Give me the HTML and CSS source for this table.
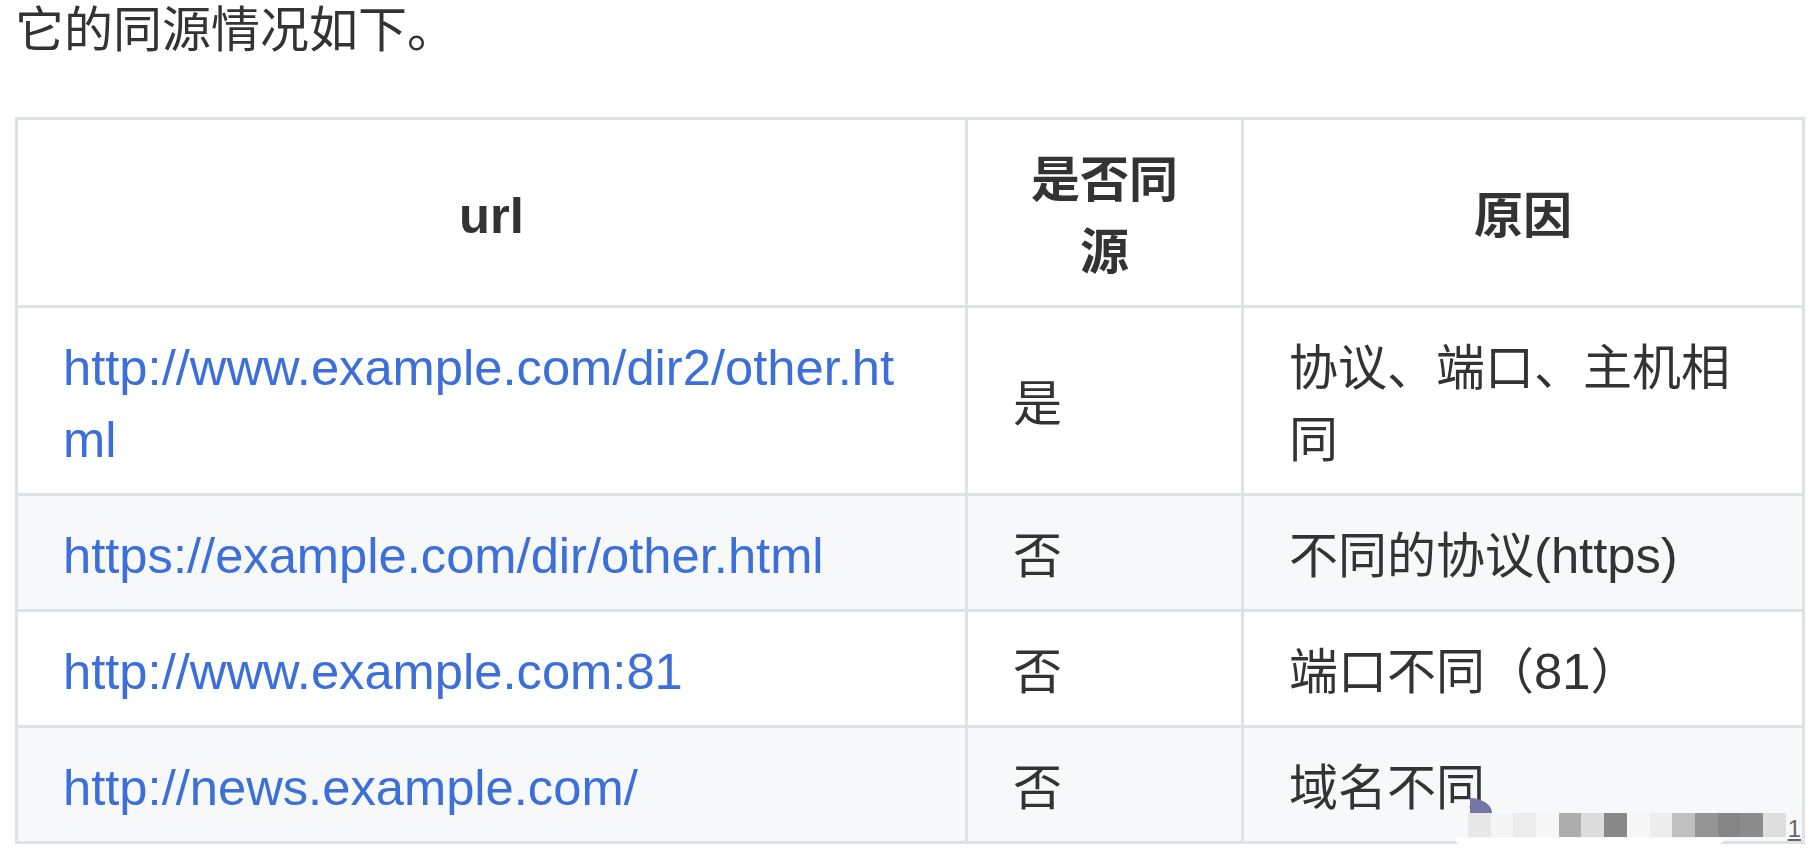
FILE: index.html
```html
<!DOCTYPE html>
<html lang="zh-CN">
<head>
<meta charset="utf-8">
<title>同源</title>
<link rel="stylesheet" href="styles.css">
</head>
<body>
<main class="page">
  <p class="intro">它的同源情况如下。</p>
  <table class="origin-table">
    <thead>
      <tr>
        <th class="col-url"><span class="lat">url</span></th>
        <th class="col-same">是否同源</th>
        <th class="col-reason">原因</th>
      </tr>
    </thead>
    <tbody>
      <tr>
        <td><a class="lat link" href="#">http://www.example.com/dir2/other.html</a></td>
        <td>是</td>
        <td>协议、端口、主机相同</td>
      </tr>
      <tr class="alt">
        <td><a class="lat link" href="#">https://example.com/dir/other.html</a></td>
        <td>否</td>
        <td>不同的协议<span class="lat">(https)</span></td>
      </tr>
      <tr>
        <td><a class="lat link" href="#">http://www.example.com:81</a></td>
        <td>否</td>
        <td>端口不同（<span class="lat">81</span>）</td>
      </tr>
      <tr class="alt">
        <td><a class="lat link" href="#">http://news.example.com/</a></td>
        <td>否</td>
        <td>域名不同</td>
      </tr>
    </tbody>
  </table>
  <div class="wm-shape"></div>
  <div class="wm-band"></div>
  <div class="watermark">
    <span class="px p1"></span><span class="px p2"></span><span class="px p3"></span><span class="px p4"></span>
    <span class="px p5"></span><span class="px p6"></span><span class="px p7"></span><span class="px p8"></span>
    <span class="px p9"></span><span class="px p10"></span><span class="px p11"></span><span class="px p12"></span>
    <span class="px p13"></span><span class="px p14"></span>
    <span class="wm-num">1</span>
  </div>
</main>
</body>
</html>
```

FILE: styles.css
```css
html, body {
  margin: 0;
  padding: 0;
  background: #ffffff;
  overflow: hidden;
}

body {
  font-family: "Liberation Sans", "Noto Sans CJK SC", sans-serif;
  color: #333333;
}

.page {
  position: relative;
  padding-left: 15px;
}

.intro {
  margin: 0 0 57px;
  font-size: 49px;
  line-height: 60px;
}

.origin-table {
  border-collapse: separate;
  border-spacing: 0;
  table-layout: fixed;
  width: 1790px;
  border-top: 3px solid #dfe2e5;
  border-left: 3px solid #dfe2e5;
  font-size: 49px;
  line-height: 72px;
}

.origin-table th,
.origin-table td {
  box-sizing: border-box;
  border-right: 3px solid #dfe2e5;
  border-bottom: 3px solid #dfe2e5;
  padding: 24px 45px 17px;
  vertical-align: middle;
  word-break: break-all;
}

.origin-table th {
  font-weight: bold;
  text-align: center;
}

.origin-table td {
  text-align: left;
}

.col-url { width: 950px; }
.col-same { width: 276px; }
.col-reason { width: 561px; }

.origin-table tr.alt td {
  background: #f6f8fa;
}

.lat {
  font-size: 50.7px;
  line-height: 1;
}

.link {
  color: #3c6fd7;
  text-decoration: none;
}

/* watermark overlay */
.wm-shape {
  position: absolute;
  left: 1470px;
  top: 798px;
  width: 22px;
  height: 15px;
  background: #7574a5;
  border-radius: 0 100% 0 0;
}

.wm-band {
  position: absolute;
  left: 1452px;
  top: 838px;
  width: 275px;
  height: 14px;
  background: #ffffff;
  clip-path: polygon(0 0, 100% 0, 94% 100%, 6% 100%);
}

.watermark {
  position: absolute;
  left: 1468px;
  top: 813px;
  display: flex;
  align-items: flex-start;
}

.px {
  display: block;
  width: 22.7px;
  height: 24px;
}

.p1 { background: #e8e8e8; }
.p2 { background: #f5f5f5; }
.p3 { background: #ececec; }
.p4 { background: #f7f7f7; }
.p5 { background: #adadad; }
.p6 { background: #dcdcdc; }
.p7 { background: #888888; }
.p8 { background: #f7f7f7; }
.p9 { background: #ededed; }
.p10 { background: #c0c0c0; }
.p11 { background: #959595; }
.p12 { background: #858585; }
.p13 { background: #8c8c8c; }
.p14 { background: #dedede; }

.wm-num {
  margin-left: 2px;
  margin-top: 4px;
  font-family: "Liberation Sans", sans-serif;
  font-size: 24px;
  line-height: 24px;
  color: #666666;
  text-decoration: underline;
}
```
